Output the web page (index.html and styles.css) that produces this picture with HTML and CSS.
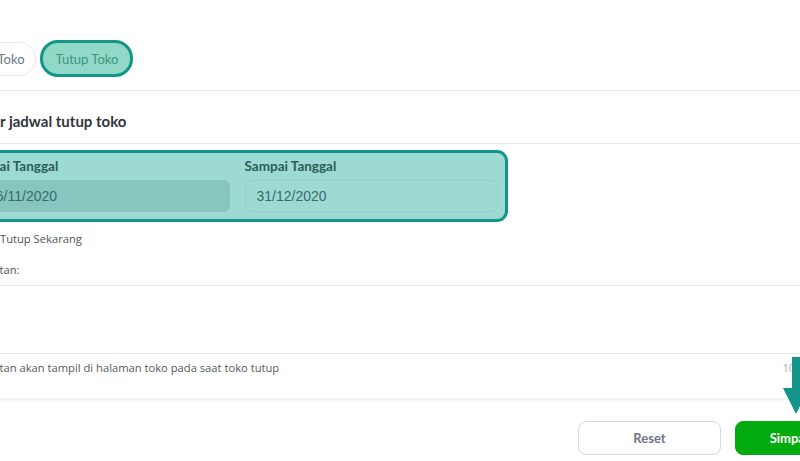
FILE: index.html
```html
<!DOCTYPE html>
<html lang="id">
<head>
<meta charset="utf-8">
<title>Tutup Toko</title>
<link rel="stylesheet" href="styles.css">
</head>
<body>
<div class="page">
  <div class="tabs">
    <span class="pill">Buka Toko</span>
    <span class="pill pill-active">Tutup Toko</span>
  </div>
  <div class="card">
    <div class="card-head">Atur jadwal tutup toko</div>
    <div class="card-body">
      <div class="dates">
        <div class="field">
          <div class="field-label">Mulai Tanggal</div>
          <div class="input input-disabled">26/11/2020</div>
        </div>
        <div class="field">
          <div class="field-label">Sampai Tanggal</div>
          <div class="input">31/12/2020</div>
        </div>
      </div>
      <div class="check"><span class="check-box"></span><span>Tutup Sekarang</span></div>
      <div class="note-label">Catatan:</div>
      <div class="textarea"></div>
      <div class="helper">
        <span>Catatan akan tampil di halaman toko pada saat toko tutup</span>
        <span class="counter">10/200</span>
      </div>
    </div>
  </div>
  <div class="actions">
    <button class="btn btn-reset">Reset</button>
    <button class="btn btn-save">Simpan</button>
  </div>
</div>
<svg class="arrow" width="30" height="60" viewBox="0 0 30 60">
  <rect x="12" y="0" width="8" height="34" fill="#129489"/>
  <polygon points="3,31 29,31 16,57" fill="#129489"/>
</svg>
</body>
</html>
```

FILE: styles.css
```css
html, body {
  margin: 0;
  padding: 0;
  background: #ffffff;
}
body {
  width: 800px;
  height: 461px;
  overflow: hidden;
  position: relative;
  font-family: "Open Sans", "Liberation Sans", sans-serif;
  color: #31353b;
}
.page {
  margin-left: -24px;
  width: 902px;
  padding-top: 40px;
}
.tabs {
  display: flex;
  align-items: center;
  gap: 4px;
  margin-left: -21px;
  height: 37px;
  margin-bottom: 13px;
}
.pill {
  display: flex;
  align-items: center;
  box-sizing: border-box;
  height: 34px;
  padding: 0 10px;
  border: 1px solid #e5e7e9;
  border-radius: 18px;
  font-family: "Lato", "Liberation Sans", sans-serif;
  font-size: 13px;
  color: #6d7588;
  background: #ffffff;
}
.pill-active {
  height: 37px;
  padding: 0 12px 0 13px;
  border: 3px solid #14958a;
  background: #92d8c6;
  color: #3a9683;
}
.card {
  border-top: 1px solid #e6e7e9;
  box-shadow: 0 2px 3px rgba(0, 0, 0, 0.07);
  padding-bottom: 22px;
}
.card-head {
  padding: 20px 0 12px 0;
  line-height: 20px;
  font-family: "Lato", "Liberation Sans", sans-serif;
  font-weight: 700;
  font-size: 15px;
  color: #31353b;
  border-bottom: 1px solid #ebecee;
}
.dates {
  display: flex;
  gap: 15px;
  width: 542px;
  box-sizing: border-box;
  margin: 6px 0 0 -10px;
  padding: 5px 7px 7px 7px;
  border: 3px solid #14958a;
  border-radius: 11px;
  background: #9cdad3;
}
.field {
  flex: 1;
  display: flex;
  flex-direction: column;
  gap: 6px;
}
.field-label {
  font-family: "Lato", "Liberation Sans", sans-serif;
  font-weight: 700;
  font-size: 13.5px;
  line-height: 16px;
  color: #2c5d58;
}
.input {
  box-sizing: border-box;
  height: 32px;
  display: flex;
  align-items: center;
  padding: 0 11px;
  border: 1px solid #92d2ca;
  border-radius: 6px;
  font-family: "Liberation Sans", "Arial", sans-serif;
  font-size: 14px;
  color: #3a6c67;
}
.input-disabled {
  background: #87c6bf;
  border-color: #87c6bf;
}
.check {
  display: flex;
  align-items: center;
  gap: 8px;
  margin-top: 8px;
  height: 16px;
  font-size: 11.2px;
  color: #4f5359;
}
.check-box {
  width: 14px;
  height: 14px;
  border: 1px solid #c0c4ca;
  border-radius: 3px;
}
.note-label {
  margin-top: 16px;
  line-height: 16px;
  font-size: 11.2px;
  color: #4f5359;
}
.textarea {
  margin-top: 7px;
  height: 67px;
  border: 1px solid #e4e6e8;
  border-radius: 8px;
  margin-right: 40px;
}
.helper {
  display: flex;
  align-items: center;
  margin-top: 6px;
  line-height: 16px;
  font-size: 11.2px;
  color: #55595f;
  padding-right: 60px;
}
.counter {
  margin-left: auto;
  font-size: 11px;
  color: #a8adb4;
}
.actions {
  display: flex;
  justify-content: flex-end;
  gap: 14px;
  margin-top: 23px;
  padding-right: 31px;
}
.btn {
  width: 143px;
  height: 34px;
  border-radius: 8px;
  font-family: "Lato", "Liberation Sans", sans-serif;
  font-weight: 700;
  font-size: 13px;
  cursor: pointer;
}
.btn-reset {
  background: #ffffff;
  border: 1px solid #d6d9de;
  color: #6d7588;
}
.btn-save {
  width: 112px;
  background: #03ac0e;
  border: 1px solid #03ac0e;
  color: #ffffff;
}
.arrow {
  position: absolute;
  left: 780px;
  top: 357px;
}
```
